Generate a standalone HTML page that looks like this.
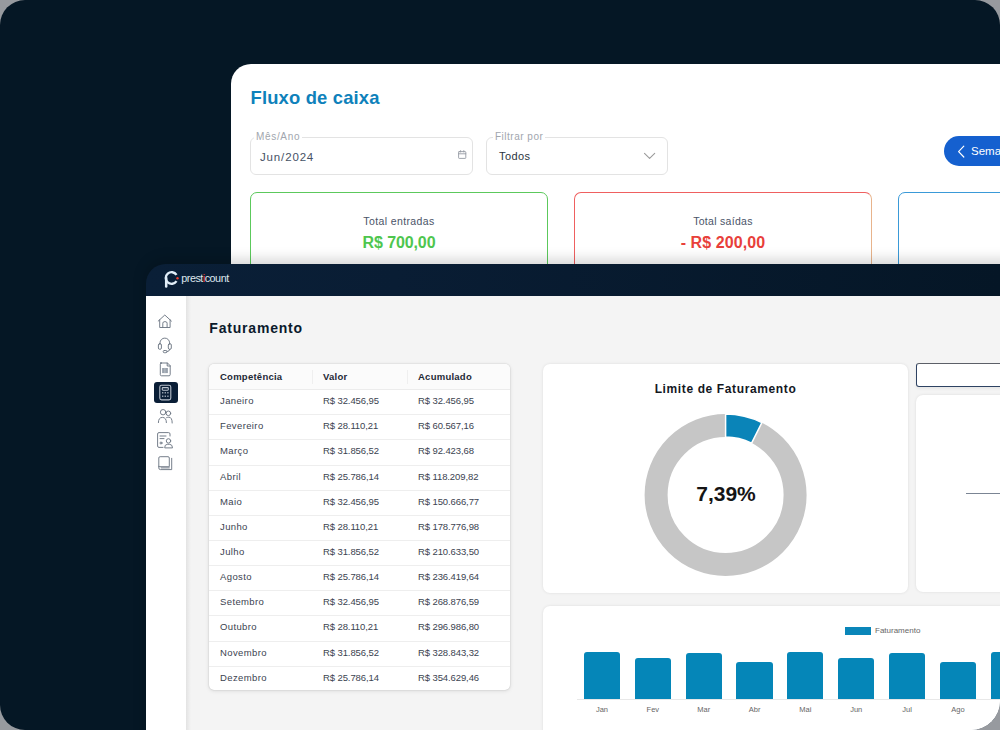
<!DOCTYPE html>
<html><head><meta charset="utf-8">
<style>
*{margin:0;padding:0;box-sizing:border-box}
html,body{width:1000px;height:730px;overflow:hidden;background:#979a9f;font-family:"Liberation Sans",sans-serif}
#frame{position:absolute;left:0;top:0;width:1000px;height:730px;border-radius:25px 25px 29px 25px;background:#051725;overflow:hidden}
.abs{position:absolute}
/* top window */
#win1{position:absolute;left:231px;top:64px;width:800px;height:240px;background:#fff;border-radius:20px 0 0 0}
#win1 .title{position:absolute;left:250px;top:84px;font-size:18px;font-weight:bold;color:#1787c0;white-space:nowrap}
.field{position:absolute;border:1px solid #e3e3e3;border-radius:6px;background:#fff}
.flabel{position:absolute;font-size:10px;color:#a1a6ae;background:#fff;padding:0 2px;white-space:nowrap}
.fval{position:absolute;white-space:nowrap}
.card{position:absolute;border:1px solid;border-radius:7px;background:#fff}
.ctext{position:absolute;white-space:nowrap;text-align:center}
/* bottom window */
#win2{position:absolute;left:146px;top:264px;width:900px;height:500px;background:linear-gradient(90deg,#0a1f37 0px,#091d34 250px,#051626 854px);border-radius:20px 0 0 0;box-shadow:0 -4px 14px rgba(0,0,0,0.18)}

#tbl{background:#fff;border-radius:5px;box-shadow:0 0 1.5px rgba(0,0,0,0.22),0 1px 4px rgba(0,0,0,0.10);overflow:hidden}
.th{position:relative;height:26.7px;line-height:26px;background:#fbfbfb;border-bottom:1px solid #ececec;font-size:9.5px;font-weight:bold;color:#1e2936}
.th i{position:absolute;top:6px;width:1px;height:14px;background:#efefef}
.tr{position:relative;height:25.15px;line-height:21.6px;border-bottom:1px solid #eeeeee;font-size:9.5px;color:#3b4350}
.tr:last-child{border-bottom:none}
.c1,.c2,.c3{position:absolute;white-space:nowrap}
.c1{left:11px}.c2{left:114px}.c3{left:209px}
.tr .c1{letter-spacing:0.38px}.tr .c2,.tr .c3{letter-spacing:-0.1px}.th span{letter-spacing:0.25px}
.panel{position:absolute;background:#fff;border-radius:7px;box-shadow:0 0 3px rgba(0,0,0,0.10)}
.bar{position:absolute;width:36.2px;background:#0586b8;border-radius:3px 3px 0 0}
.blab{position:absolute;width:56px;text-align:center;font-size:7.5px;color:#666;white-space:nowrap}

</style></head>
<body>
<div id="frame">
  <div id="win1"></div>
  <div class="abs title" style="left:250.5px;top:86.5px;font-size:18.4px;font-weight:bold;color:#0e81bb;letter-spacing:0.17px;white-space:nowrap">Fluxo de caixa</div>
  <div class="field" style="left:250px;top:136.5px;width:223px;height:38px"></div>
  <div class="flabel" style="left:254px;top:131px;letter-spacing:0.67px">Mês/Ano</div>
  <div class="fval" style="left:260px;top:151.2px;font-size:11.5px;letter-spacing:0.85px;color:#465266">Jun/2024</div>
  <div class="field" style="left:486px;top:136.5px;width:182px;height:38px"></div>
  <div class="flabel" style="left:493px;top:131px;letter-spacing:0.5px">Filtrar por</div>
  <div class="fval" style="left:499px;top:149.6px;font-size:11px;letter-spacing:0.4px;color:#2b3441">Todos</div>
  <div class="abs" style="left:944px;top:136px;width:80px;height:30px;border-radius:15px;background:#1560cf"></div>
  <svg class="abs" style="left:440px;top:140px" width="240" height="30" viewBox="440 140 240 30" fill="none" stroke-linecap="round" stroke-linejoin="round">
    <rect x="458.6" y="151.6" width="7.2" height="6.8" rx="0.6" stroke="#959ba4" stroke-width="0.9"/>
    <path d="M458.6,153.8 L465.8,153.8 M460.6,150.6 L460.6,152 M463.8,150.6 L463.8,152" stroke="#959ba4" stroke-width="0.9"/>
    <path d="M644.5,153.3 L649.6,158.4 L654.7,153.3" stroke="#9b9b9b" stroke-width="1.1"/>
  </svg>
  <svg class="abs" style="left:950px;top:140px" width="20" height="22" viewBox="950 140 20 22" fill="none">
    <path d="M963.8,146.2 L958.6,151.6 L963.8,157" stroke="#fff" stroke-width="1.2" stroke-linecap="round" stroke-linejoin="round"/>
  </svg>
  <div class="abs" style="left:971px;top:145px;font-size:11.5px;color:#fff;white-space:nowrap">Semana</div>

  <div class="card" style="left:250px;top:192px;width:298px;height:120px;border-color:#5cc95c"></div>
  <div class="card" style="left:574px;top:192px;width:298px;height:120px;border-color:#ef6060 #e8b48c #e8b48c #ef6060"></div>
  <div class="card" style="left:898px;top:192px;width:298px;height:120px;border-color:#3a9ad8"></div>
  <div class="ctext" style="left:250px;width:298px;top:214.5px;font-size:10.5px;letter-spacing:0.39px;color:#4a5468">Total entradas</div>
  <div class="ctext" style="left:250px;width:298px;top:234.2px;font-size:16px;font-weight:bold;letter-spacing:-0.1px;color:#4ec64e">R$ 700,00</div>
  <div class="ctext" style="left:574px;width:298px;top:214.5px;font-size:10.5px;letter-spacing:0.3px;color:#4a5468">Total saídas</div>
  <div class="ctext" style="left:574px;width:298px;top:234.2px;font-size:16px;font-weight:bold;letter-spacing:0.1px;color:#e8403a">- R$ 200,00</div>


  <div id="win2"></div>
  <div class="abs" style="left:146px;top:296px;width:900px;height:440px;background:#f4f4f4"></div>
  <div class="abs" style="left:146px;top:296px;width:40px;height:440px;background:#fff"></div>
  <div class="abs" style="left:186px;top:296px;width:5px;height:440px;background:linear-gradient(90deg,rgba(0,0,0,0.07),rgba(0,0,0,0))"></div>
  <!-- logo -->
  <svg class="abs" style="left:160px;top:266px" width="80" height="26" viewBox="160 266 80 26">
    <path d="M176.50,274.80 A5.85,5.85 0 1 0 176.50,281.20" fill="none" stroke="#e2eef8" stroke-width="2.4" stroke-linecap="butt"/>
    <path d="M166.2,278 L166.2,286.4" fill="none" stroke="#e2eef8" stroke-width="2.5" stroke-linecap="round"/>
    <circle cx="177.5" cy="278.2" r="1.2" fill="#ef3b2d"/>
  </svg>
  <div class="abs" style="left:181.3px;top:272px;font-size:10.8px;color:#dfe6ee;white-space:nowrap;letter-spacing:-0.5px">prest<span style="color:#ef3b2d">i</span>count</div>

  <!-- sidebar icons -->
  <svg class="abs" style="left:146px;top:296px" width="40" height="200" viewBox="146 296 40 200" fill="none" stroke="#6f7885" stroke-width="0.95" stroke-linejoin="round" stroke-linecap="round">
    <path d="M158.2,321.1 L164.8,315 L171.4,321.1 M159.7,319.8 L159.7,327.5 L170.1,327.5 L170.1,319.8 M162.8,327.5 L162.8,323.2 Q162.8,321.6 164.95,321.6 Q167.1,321.6 167.1,323.2 L167.1,327.5"/>
    <path d="M160,344 L160,342.9 A4.8,4.8 0 0 1 169.6,342.9 L169.6,344"/>
    <rect x="158.4" y="343.7" width="3" height="5.6" rx="1.3"/>
    <rect x="168.3" y="343.7" width="3" height="5.6" rx="1.3"/>
    <path d="M169.8,349.4 Q169.6,351.6 167,351.6"/>
    <rect x="163.2" y="350.5" width="3.8" height="2.2" rx="1.1"/>
    <path d="M160.5,363 L167.5,363 L170.2,365.7 L170.2,374.6 Q170.2,375.8 169,375.8 L161.5,375.8 Q160.3,375.8 160.3,374.6 L160.3,364.2 Q160.3,363 161.5,363 Z M167.2,363 L167.2,366 L170.2,366"/>
    <rect x="162.1" y="368" width="5.8" height="5.1" fill="#9aa2ad" stroke="none"/><path d="M164.9,368 L164.9,373.1" stroke="#d9dde2" stroke-width="0.5"/>
  </svg>
  <div class="abs" style="left:154px;top:382px;width:24px;height:21px;border-radius:3px;background:#0a1e36"></div>
  <svg class="abs" style="left:146px;top:378px" width="40" height="100" viewBox="146 378 40 100" fill="none" stroke="#b9c1cc" stroke-width="1.1" stroke-linejoin="round" stroke-linecap="round">
    <rect x="159.8" y="385.3" width="11" height="14.6" rx="1.8"/>
    <rect x="162.3" y="387.6" width="6" height="2.6" rx="0.6"/>
    <g fill="#b9c1cc" stroke="none">
      <rect x="162" y="392.2" width="1.4" height="1.2"/><rect x="164.6" y="392.2" width="1.4" height="1.2"/><rect x="167.2" y="392.2" width="1.4" height="1.2"/>
      <rect x="162" y="395.6" width="1.4" height="1.2"/><rect x="164.6" y="395.6" width="1.4" height="1.2"/><rect x="167.2" y="395.6" width="1.4" height="1.2"/>
    </g>
  </svg>
  <svg class="abs" style="left:146px;top:400px" width="40" height="80" viewBox="146 400 40 80" fill="none" stroke="#6f7885" stroke-width="0.95" stroke-linejoin="round" stroke-linecap="round">
    <circle cx="163.1" cy="412.2" r="2.7"/>
    <circle cx="168.4" cy="413.3" r="2.3"/>
    <path d="M158.4,422.6 Q158.4,417.4 162.4,417.4 Q166.4,417.4 166.4,422.6"/>
    <path d="M166.6,417.6 Q167.6,417.2 168.8,417.2 Q172.2,417.2 172.2,423"/>
    <path d="M170,436 L170,434 Q170,432.6 168.6,432.6 L159,432.6 Q157.6,432.6 157.6,434 L157.6,446 Q157.6,447.4 159,447.4 L163,447.4"/>
    <path d="M160,436 L166,436 M160,438.6 L164,438.6"/>
    <circle cx="161" cy="443" r="1"/>
    <circle cx="168.5" cy="440.9" r="2.2"/>
    <path d="M164.7,447.5 Q164.5,444.6 167.2,444.3 L169.8,444.3 Q172.5,444.6 172.5,447.5 Z"/>
    <path d="M158.8,466.3 L158.8,458 Q158.8,456.7 160.1,456.7 L168,456.7 Q169.3,456.7 169.3,458 L169.3,466.3 Z"/>
    <path d="M171.7,458.3 L171.7,469.6 L160.4,469.6 Q158.8,469.6 158.8,467.9 L158.8,466.3"/>
    <path d="M161.2,467.9 L169.3,467.9"/>
  </svg>

  <div class="abs" style="left:209.3px;top:319.5px;font-size:14px;letter-spacing:0.8px;font-weight:bold;color:#0b1a2c;white-space:nowrap">Faturamento</div>

  <!-- table -->
  <div id="tbl" class="abs" style="left:209px;top:363.5px;width:301.4px;height:326.7px">
    <div class="th"><span class="c1">Competência</span><span class="c2">Valor</span><span class="c3">Acumulado</span><i style="left:103px"></i><i style="left:198.2px"></i></div>
    <div class="tr"><span class="c1">Janeiro</span><span class="c2">R$ 32.456,95</span><span class="c3">R$ 32.456,95</span></div>
<div class="tr"><span class="c1">Fevereiro</span><span class="c2">R$ 28.110,21</span><span class="c3">R$ 60.567,16</span></div>
<div class="tr"><span class="c1">Março</span><span class="c2">R$ 31.856,52</span><span class="c3">R$ 92.423,68</span></div>
<div class="tr"><span class="c1">Abril</span><span class="c2">R$ 25.786,14</span><span class="c3">R$ 118.209,82</span></div>
<div class="tr"><span class="c1">Maio</span><span class="c2">R$ 32.456,95</span><span class="c3">R$ 150.666,77</span></div>
<div class="tr"><span class="c1">Junho</span><span class="c2">R$ 28.110,21</span><span class="c3">R$ 178.776,98</span></div>
<div class="tr"><span class="c1">Julho</span><span class="c2">R$ 31.856,52</span><span class="c3">R$ 210.633,50</span></div>
<div class="tr"><span class="c1">Agosto</span><span class="c2">R$ 25.786,14</span><span class="c3">R$ 236.419,64</span></div>
<div class="tr"><span class="c1">Setembro</span><span class="c2">R$ 32.456,95</span><span class="c3">R$ 268.876,59</span></div>
<div class="tr"><span class="c1">Outubro</span><span class="c2">R$ 28.110,21</span><span class="c3">R$ 296.986,80</span></div>
<div class="tr"><span class="c1">Novembro</span><span class="c2">R$ 31.856,52</span><span class="c3">R$ 328.843,32</span></div>
<div class="tr"><span class="c1">Dezembro</span><span class="c2">R$ 25.786,14</span><span class="c3">R$ 354.629,46</span></div>
  </div>

  <!-- donut card -->
  <div class="panel" style="left:543px;top:363.5px;width:365px;height:229px"></div>
  <div class="abs" style="left:543px;top:381.5px;width:365px;text-align:center;font-size:12px;letter-spacing:0.62px;font-weight:bold;color:#14181f;white-space:nowrap">Limite de Faturamento</div>
  <svg class="abs" style="left:630px;top:400px" width="190" height="190" viewBox="630 400 190 190">
    <circle cx="725.6" cy="495" r="69.5" fill="none" stroke="#c6c6c6" stroke-width="23"/>
    <path d="M725.60,414.00 A81,81 0 0 1 761.87,422.58 L751.57,443.14 A58,58 0 0 0 725.60,437.00 Z" fill="#0a84b8" stroke="#fff" stroke-width="1.5" stroke-linejoin="miter"/>
  </svg>
  <div class="abs" style="left:643.5px;top:481.8px;width:165px;text-align:center;font-size:21px;letter-spacing:0px;font-weight:bold;color:#151515;white-space:nowrap">7,39%</div>

  <div class="abs" style="left:916px;top:363px;width:120px;height:24px;border:1.2px solid #2e4262;border-top-color:#5c6068;border-radius:3px;background:#fff;box-shadow:0 2px 3px rgba(0,0,0,0.06)"></div>
  <div class="panel" style="left:916px;top:395.2px;width:120px;height:196.8px"></div>
  <div class="abs" style="left:966px;top:493px;width:40px;height:1px;background:#7b8594"></div>

  <!-- bar chart card -->
  <div class="panel" style="left:543px;top:606px;width:500px;height:200px"></div>
  <div class="abs" style="left:845px;top:627px;width:26px;height:8px;background:#0a86b9"></div>
  <div class="abs" style="left:875px;top:625.5px;font-size:8px;color:#666;white-space:nowrap">Faturamento</div>
  <div class="abs" style="left:577px;top:698.5px;width:430px;height:1px;background:#e8e8e8"></div>
  <div class="bar" style="left:583.90px;top:651.7px;height:47.3px"></div>
  <div class="blab" style="left:574.00px;top:705px">Jan</div>
  <div class="bar" style="left:634.75px;top:657.8px;height:41.2px"></div>
  <div class="blab" style="left:624.85px;top:705px">Fev</div>
  <div class="bar" style="left:685.60px;top:652.7px;height:46.3px"></div>
  <div class="blab" style="left:675.70px;top:705px">Mar</div>
  <div class="bar" style="left:736.45px;top:661.5px;height:37.5px"></div>
  <div class="blab" style="left:726.55px;top:705px">Abr</div>
  <div class="bar" style="left:787.30px;top:651.7px;height:47.3px"></div>
  <div class="blab" style="left:777.40px;top:705px">Mai</div>
  <div class="bar" style="left:838.15px;top:657.8px;height:41.2px"></div>
  <div class="blab" style="left:828.25px;top:705px">Jun</div>
  <div class="bar" style="left:889.00px;top:652.7px;height:46.3px"></div>
  <div class="blab" style="left:879.10px;top:705px">Jul</div>
  <div class="bar" style="left:939.85px;top:661.5px;height:37.5px"></div>
  <div class="blab" style="left:929.95px;top:705px">Ago</div>
  <div class="bar" style="left:990.70px;top:651.7px;height:47.3px"></div>
  <div class="blab" style="left:980.80px;top:705px">Set</div>
</div>
</body></html>
